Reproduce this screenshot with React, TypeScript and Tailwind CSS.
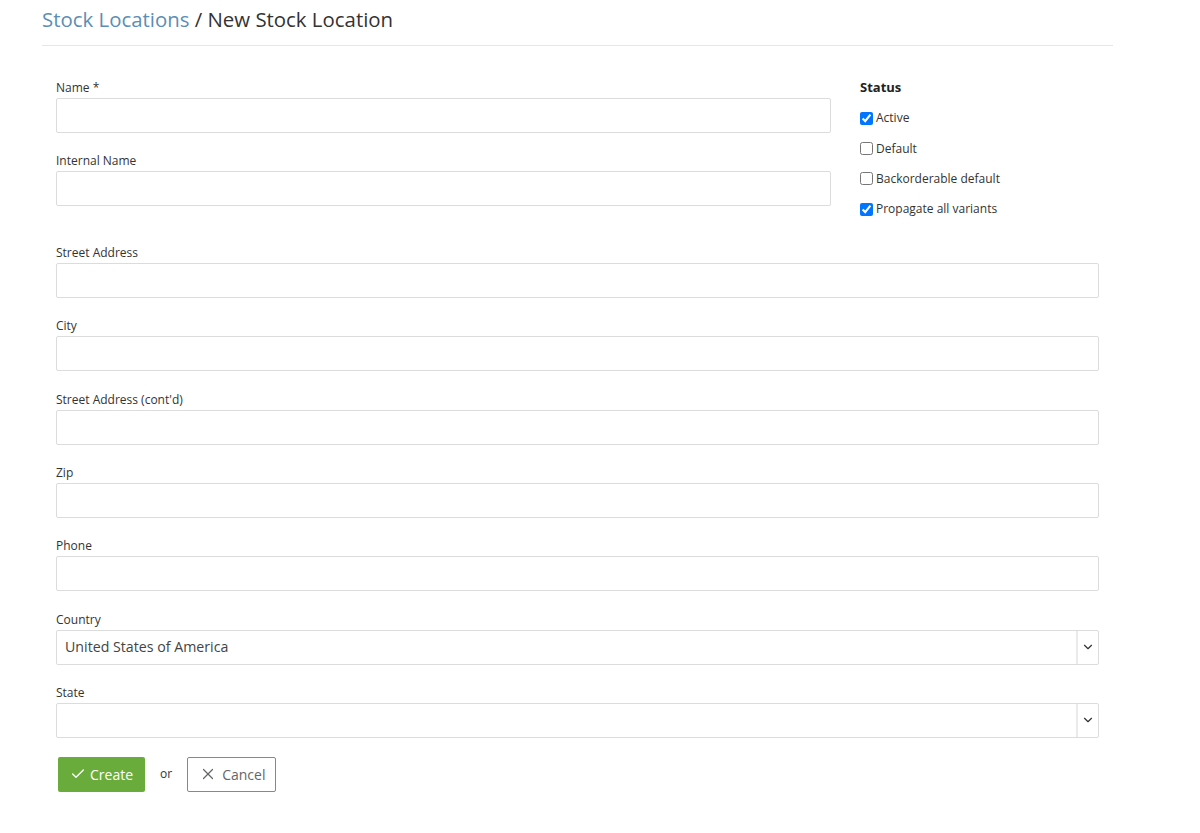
import { Check, X, ChevronDown } from 'lucide-react';

const font = { fontFamily: '"Open Sans", "Noto Sans", sans-serif' };

// Label + text input pair
function Field({ label, gap = 'mb-[19px]' }: { label: string; gap?: string }) {
  return (
    <div className={gap}>
      <label className="block text-[12px] leading-[18px] text-[#333] mb-[1px]">{label}</label>
      <input
        type="text"
        className="block w-full h-[35px] border border-[#dcdcdc] rounded-[2px] bg-white px-2 outline-none"
      />
    </div>
  );
}

function SelectField({ label, value }: { label: string; value: string }) {
  return (
    <div className="mb-[19px]">
      <label className="block text-[12px] leading-[18px] text-[#333] mb-[1px]">{label}</label>
      <div className="flex h-[35px] border border-[#dcdcdc] rounded-[2px] bg-white">
        <div className="flex-1 flex items-center px-2 text-[14.2px] text-[#444]">{value}</div>
        <div className="w-[22px] border-l-2 border-[#eaeaea] flex items-center justify-center">
          <ChevronDown className="w-[14px] h-[14px] text-[#333]" strokeWidth={2} />
        </div>
      </div>
    </div>
  );
}

function StatusBox({ label, checked }: { label: string; checked?: boolean }) {
  return (
    <label className="flex items-center h-[30.4px] text-[12px] text-[#333]">
      <input type="checkbox" defaultChecked={checked} className="w-[13px] h-[13px] mr-[3px] m-0" />
      {label}
    </label>
  );
}

export default function App() {
  return (
    <div className="min-h-[833px] bg-white" style={font}>
      <div className="pl-[42px] pr-[87px]">
        <div className="h-[46px] border-b border-[#e6e6ea] pt-[4px]">
          <h1 className="text-[20.4px] leading-[30px] font-normal text-[#333]">
            <span className="text-[#5b8eb5]">Stock Locations</span> / New Stock Location
          </h1>
        </div>
      </div>

      <div className="pl-[56px] pr-[101px] pt-[33px]">
        <div className="flex pb-[19px]">
          <div className="w-[775px]">
            <Field label="Name *" />
            <div className="-mb-[19px]">
              <Field label="Internal Name" />
            </div>
          </div>
          <div className="ml-[29px] -mt-[1px]">
            <h5 className="text-[13px] font-bold text-[#222] leading-[18px] mb-[7px]">Status</h5>
            <StatusBox label="Active" checked />
            <StatusBox label="Default" />
            <StatusBox label="Backorderable default" />
            <StatusBox label="Propagate all variants" checked />
          </div>
        </div>

        <Field label="Street Address" />
        <Field label="City" gap="mb-[20px]" />
        <Field label="Street Address (cont'd)" />
        <Field label="Zip" />
        <Field label="Phone" gap="mb-[20px]" />
        <SelectField label="Country" value="United States of America" />
        <SelectField label="State" value="" />

        <div className="flex items-center pl-[2px]">
          <button className="flex items-center gap-[4px] h-[35px] px-[12px] bg-[#6aac3c] text-white text-[14px] rounded-[2px]">
            <Check className="w-[16px] h-[16px]" strokeWidth={2} />
            Create
          </button>
          <span className="ml-[15px] mr-[15px] text-[12px] text-[#333]">or</span>
          <button className="flex items-center gap-[5px] h-[35px] pl-[11px] pr-[10px] bg-white border border-[#888] text-[#666] text-[14px] rounded-[2px]">
            <X className="w-[18px] h-[18px]" strokeWidth={1.6} />
            Cancel
          </button>
        </div>
      </div>
    </div>
  );
}
